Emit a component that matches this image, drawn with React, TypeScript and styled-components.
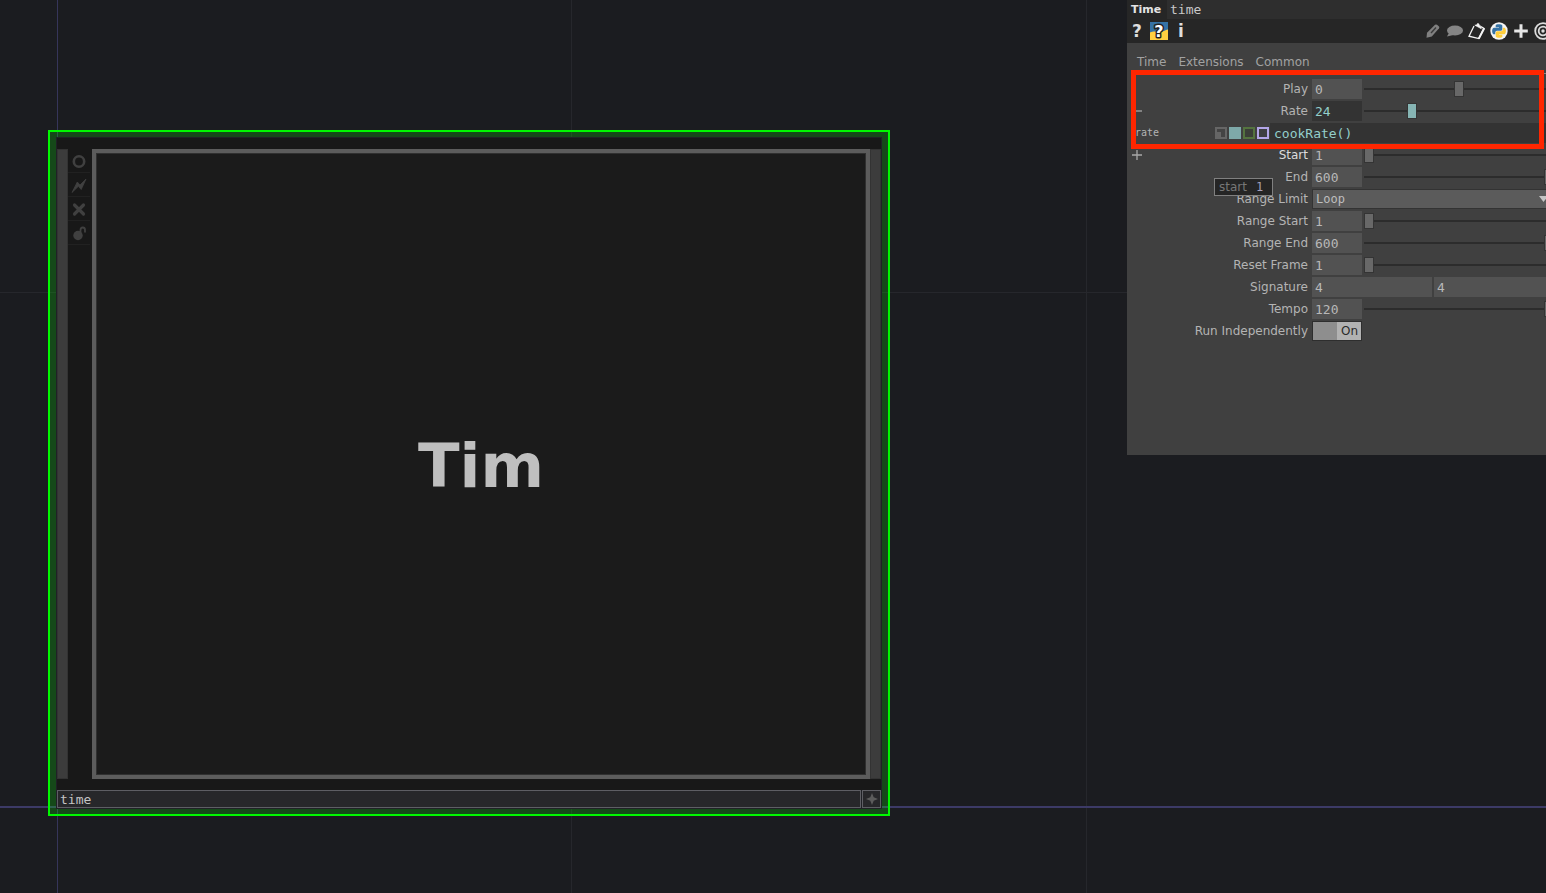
import React from "react";
import styled, { createGlobalStyle } from "styled-components";

const SANS = `"DejaVu Sans", Verdana, sans-serif`;
const MONO = `"DejaVu Sans Mono", monospace`;

const GlobalStyle = createGlobalStyle`
  *, *::before, *::after { box-sizing: border-box; }
  body { margin: 0; background: #1b1c20; }
  button, input, select { margin: 0; padding: 0; border: 0; border-radius: 0; font: inherit; color: inherit; outline: none; }
  svg { display: block; }
`;

/* ---------- network canvas ---------- */

const Workspace = styled.main`
  display: flex;
  align-items: flex-start;
  min-height: 100vh;
  overflow: hidden;
  font-family: ${SANS};
  font-size: 12px;
  color: #b4b4b4;
  background-color: #1b1c20;
  background-image:
    linear-gradient(#3c3a66, #3c3a66),
    linear-gradient(#36355a, #36355a),
    linear-gradient(#26272c, #26272c),
    linear-gradient(#26272c, #26272c),
    linear-gradient(#26272c, #26272c);
  background-repeat: no-repeat;
  background-size: 100% 2px, 1px 100%, 1px 100%, 1px 100%, 100% 1px;
  background-position: 0 806px, 57px 0, 571px 0, 1086px 0, 0 292px;
`;

const NetworkArea = styled.section`
  flex: 1;
  min-width: 0;
  padding: 130px 237px 76px 48px;
`;

const Selection = styled.article`
  border: 2px solid #00f800;
  background: rgba(0, 255, 0, 0.2);
  padding: 5px 6px;
`;

const NodeBody = styled.div`
  background: #202126;
  padding: 1px;
`;

const Strip = styled.div`
  height: 11px;
  background: #181818;
`;

const NodeMiddle = styled.div`
  display: flex;
  height: 630px;
  background: #181818;
`;

const Connector = styled.div`
  width: 11px;
  background: #3c3c3c;
  border: 1px solid #333333;
`;

const FlagColumn = styled.div`
  display: flex;
  flex-direction: column;
  width: 24px;
  padding-right: 2px;
`;

const FlagButton = styled.button`
  display: grid;
  place-items: center;
  height: 24px;
  background: none;
  && { border-bottom: 1px solid #212121; }
  color: #404040;
`;

const Viewer = styled.div`
  flex: 1;
  display: grid;
  place-items: center;
  padding-top: 4px;
  background: #1b1b1b;
  border: 4px solid #5c5c5c;
  outline: 1px solid #303030;
  outline-offset: -5px;
  font-weight: bold;
  font-size: 61px;
  line-height: 70px;
  color: #bfbfbf;
`;

const NameRow = styled.div`
  display: flex;
  gap: 1px;
  height: 18px;
`;

const NameInput = styled.input`
  flex: 1;
  min-width: 0;
  && {
    padding: 0 2px;
    border: 1px solid #5e5e64;
    background: #27272a;
    font-family: ${MONO};
    font-size: 13px;
    color: #c4c4c4;
  }
`;

const ActivateButton = styled.button`
  display: grid;
  place-items: center;
  width: 19px;
  && { border: 1px solid #5e5e64; }
  background: #27272a;
  color: #5c5c5c;
`;

/* ---------- parameter panel ---------- */

const Panel = styled.aside`
  position: relative;
  flex: 0 0 419px;
  height: 455px;
  overflow: hidden;
  background: #404040;
`;

const TitleBar = styled.header`
  display: flex;
  height: 19px;
  line-height: 19px;
  background: #2e2e2e;
`;

const OpType = styled.strong`
  width: 40px;
  padding-left: 4px;
  background: #262626;
  font-size: 11px;
  color: #e4e4e4;
`;

const OpName = styled.span`
  padding-left: 3px;
  font-family: ${MONO};
  font-size: 13px;
  color: #c8c8c8;
`;

const Toolbar = styled.div`
  display: flex;
  justify-content: space-between;
  align-items: center;
  height: 24px;
  margin-right: -6px;
  padding-left: 1px;
  background: #262626;
`;

const ToolGroup = styled.div`
  display: flex;
  gap: 4px;
`;

const ToolButton = styled.button`
  display: grid;
  place-items: center;
  width: 18px;
  height: 18px;
  background: none;
  && {
    font-weight: bold;
    font-size: 17px;
    line-height: 18px;
    color: #dedede;
  }
`;

const Tabs = styled.nav`
  display: flex;
  gap: 12px;
  height: 31px;
  margin-left: 10px;
  padding-top: 11px;
  line-height: 16px;
  border-bottom: 1px solid #8a8a8a;
`;

const Tab = styled.a`
  color: #a2a2a2;
  text-decoration: none;
`;

const Params = styled.form`
  padding-top: 4px;
  margin-right: -8px;
`;

const Row = styled.div`
  display: grid;
  grid-template-columns: 20px 157px minmax(0, 1fr);
  column-gap: 4px;
  align-items: center;
  height: 22px;
`;

const Expander = styled.button`
  display: grid;
  place-items: center;
  width: 10px;
  height: 10px;
  margin-left: 5px;
  background: none;
  && { color: #a8a8a8; }
`;

const Label = styled.label<{ $bright?: boolean }>`
  text-align: right;
  line-height: 20px;
  white-space: nowrap;
  color: ${(p) => (p.$bright ? "#dcdcdc" : "#b4b4b4")};
`;

const Controls = styled.div`
  display: flex;
  gap: 2px;
  height: 20px;
`;

const Field = styled.input<{ $wide?: boolean; $driven?: boolean }>`
  flex: ${(p) => (p.$wide ? "1 1 0" : "0 0 50px")};
  min-width: 0;
  && {
    padding: 0 3px;
    font-family: ${MONO};
    font-size: 13px;
    background: ${(p) => (p.$driven ? "#333333" : "#525252")};
    color: ${(p) => (p.$driven ? "#93cfcc" : "#b8b8b8")};
  }
`;

const Slider = styled.input<{ $driven?: boolean }>`
  flex: 1;
  min-width: 0;
  appearance: none;
  background: linear-gradient(#2c2c2c, #2c2c2c) 0 9px / 100% 2px no-repeat;
  &::-webkit-slider-thumb {
    appearance: none;
    width: 10px;
    height: 16px;
    border: 1px solid #343434;
    background: ${(p) => (p.$driven ? "#86b5b4" : "#686868")};
  }
`;

const MenuWrap = styled.div`
  display: flex;
  flex: 1;
  align-items: center;
  border: 1px solid #333333;
  background: #5b5b5b;
`;

const Menu = styled.select`
  flex: 1;
  height: 18px;
  appearance: none;
  background: none;
  && {
    padding-left: 3px;
    font-family: ${MONO};
    font-size: 12px;
    color: #bebebe;
  }
`;

const MenuArrow = styled.svg`
  margin: 0 5px 0 -14px;
  pointer-events: none;
`;

const ToggleBox = styled.span`
  position: relative;
  display: flex;
  width: 50px;
  border: 1px solid #2e2e2e;
  background: linear-gradient(90deg, #8e8e8e 50%, #b2b2b2 50%);
  color: #2a2a2a;
`;

const ToggleInput = styled.input`
  position: absolute;
  inset: 0;
  appearance: none;
`;

const ToggleText = styled.span`
  flex: 1;
  padding-right: 3px;
  text-align: right;
  line-height: 18px;
`;

const ExpressionRow = styled.div`
  display: flex;
  align-items: center;
  height: 22px;
  padding-left: 8px;
`;

const ParamName = styled.label`
  width: 80px;
  font-family: ${MONO};
  font-size: 10px;
  line-height: 20px;
`;

const Modes = styled.div`
  display: flex;
  gap: 2px;
  margin-right: 1px;
`;

const Mode = styled.button<{ $line: string; $fill: string }>`
  width: 12px;
  height: 12px;
  && { border: 2px solid ${(p) => p.$line}; }
  background: ${(p) => p.$fill};
`;

const Expression = styled.input`
  flex: 1;
  min-width: 0;
  height: 20px;
  && {
    padding: 0 4px;
    background: #333333;
    font-family: ${MONO};
    font-size: 13px;
    color: #93cfcc;
  }
`;

const Highlight = styled.div`
  position: absolute;
  left: 4px;
  right: 2px;
  top: 70px;
  height: 79px;
  border: 5px solid #ff2600;
  pointer-events: none;
`;

const Tooltip = styled.div`
  position: absolute;
  left: 87px;
  top: 178px;
  display: flex;
  gap: 9px;
  height: 18px;
  padding: 0 9px 0 4px;
  border: 1px solid #808080;
  background: #252525;
  line-height: 17px;
  color: #777777;
`;

const TooltipValue = styled.span`
  font-family: ${MONO};
  color: #a39fb8;
`;

/* ---------- icons ---------- */

const PY_BLUE =
  "M14.25.18l.9.2.73.26.59.3.45.32.34.34.25.34.16.33.1.3.04.26.02.2-.01.13V8.5l-.05.63-.13.55-.21.46-.26.38-.3.31-.33.25-.35.19-.35.14-.33.1-.3.07-.26.04-.21.02H8.77l-.69.05-.59.14-.5.22-.41.27-.33.32-.27.35-.2.36-.15.37-.1.35-.07.32-.04.27-.02.21v3.06H3.17l-.21-.03-.28-.07-.32-.12-.35-.18-.36-.26-.36-.36-.35-.46-.32-.59-.28-.73-.21-.88-.14-1.05-.05-1.23.06-1.22.16-1.04.24-.87.32-.71.36-.57.4-.44.42-.33.42-.24.4-.16.36-.1.32-.05.24-.01h.16l.06.01h8.16v-.83H6.18l-.01-2.75-.02-.37.05-.34.11-.31.17-.28.25-.26.31-.23.38-.2.44-.18.51-.15.58-.12.64-.1.71-.06.77-.04.84-.02 1.27.05z";
const PY_YELLOW =
  "M21.1 6.11l.28.06.32.12.35.18.36.27.36.35.35.47.32.59.28.73.21.88.14 1.04.05 1.23-.06 1.23-.16 1.04-.24.86-.32.71-.36.57-.4.45-.42.33-.42.24-.4.16-.36.09-.32.05-.24.02-.16-.01h-8.22v.82h5.84l.01 2.76.02.36-.05.34-.11.31-.17.29-.25.25-.31.24-.38.2-.44.17-.51.15-.58.13-.64.09-.71.07-.77.04-.84.01-1.27-.04-1.07-.14-.9-.2-.73-.25-.59-.3-.45-.33-.34-.34-.25-.34-.16-.33-.1-.3-.04-.25-.02-.2.01-.13v-5.34l.05-.64.13-.54.21-.46.26-.38.3-.32.33-.24.35-.2.35-.14.33-.1.3-.06.26-.04.21-.02.13-.01h5.84l.69-.05.59-.14.5-.21.41-.28.33-.32.27-.35.2-.36.15-.36.1-.35.07-.32.04-.28.02-.21V6.07h2.09l.14.01z";

const PythonHelpIcon = () => (
  <svg width="18" height="18" viewBox="0 0 18 18">
    <rect width="18" height="18" fill="#3572a5" />
    <path d="M0 10.500C3 9 5 9.500 8 9.800C13 10 14 8.500 18 7.500V18H0z" fill="#ffd040" />
    <text x="9" y="15" textAnchor="middle" fontFamily="DejaVu Sans" fontWeight="bold" fontSize="16" fill="#ffffff" stroke="#222222" strokeWidth="3" paintOrder="stroke" strokeLinejoin="round">?</text>
  </svg>
);

const PencilIcon = () => (
  <svg width="18" height="18" viewBox="0 0 18 18" fill="#808080">
    <path d="M2.500 15.800L3 10.800L11 2.800Q12 2 13 2.800L15 4.500Q15.700 5.300 15 6.300L7.800 14.500z" />
    <path d="M7 11L12 5.600" stroke="#3a3a3a" strokeWidth="1.400" />
  </svg>
);

const CommentIcon = () => (
  <svg width="18" height="18" viewBox="0 0 18 18" fill="#858585">
    <ellipse cx="9" cy="8.500" rx="8" ry="5" />
    <path d="M3.500 10L1 14.600L8.500 12.800z" />
  </svg>
);

const ClipboardIcon = () => (
  <svg width="18" height="18" viewBox="0 0 18 18" fill="none" stroke="#f4f4f4">
    <path d="M6 4L1 14.200L10.800 16.600L16 6.400L13 4.600" strokeWidth="1.300" />
    <path d="M10.800 16.600L16.200 6.200" strokeWidth="2" />
    <path d="M6.800 3.200L13.300 6.800L12.500 3.800L11.300 3.200Q11.100 1 9.400 1.600L9 2.800z" fill="#f4f4f4" strokeWidth=".6" />
  </svg>
);

const PythonIcon = () => (
  <svg width="18" height="18" viewBox="0 0 18 18">
    <circle cx="9" cy="9" r="8.700" fill="#f4f4f4" />
    <g transform="translate(2.200 2.200) scale(.567)">
      <path d={PY_BLUE} fill="#3572a5" />
      <path d={PY_YELLOW} fill="#ffce3c" />
    </g>
  </svg>
);

const PlusIcon = () => (
  <svg width="18" height="18" viewBox="0 0 18 18" stroke="#e6e6e6" strokeWidth="3">
    <path d="M9 2.200v13.600M2.200 9h13.600" />
  </svg>
);

const TargetIcon = () => (
  <svg width="18" height="18" viewBox="0 0 18 18" fill="none" stroke="#dcdcdc" strokeWidth="1.800">
    <circle cx="9" cy="9" r="7.800" />
    <circle cx="9" cy="9" r="4.300" />
    <circle cx="9" cy="9" r="1.700" fill="#dcdcdc" stroke="none" />
  </svg>
);

const FlagIcon = ({ children }: { children: React.ReactNode }) => (
  <svg width="16" height="16" viewBox="0 0 16 16" fill="none" stroke="currentColor">
    {children}
  </svg>
);

/* ---------- parameter rows ---------- */

type NumberParamProps = {
  id: string;
  label: string;
  value: string;
  min?: number;
  max: number;
  driven?: boolean;
  bright?: boolean;
  expander?: "plus" | "minus";
};

const NumberParam = ({ id, label, value, min = 0, max, driven, bright, expander }: NumberParamProps) => (
  <Row>
    {expander ? (
      <Expander type="button" aria-label={`Toggle ${label} details`}>
        <svg width="10" height="10" viewBox="0 0 10 10" stroke="currentColor" strokeWidth="1.300">
          <path d={expander === "plus" ? "M0 5h10M5 0v10" : "M0 5h10"} />
        </svg>
      </Expander>
    ) : (
      <span />
    )}
    <Label htmlFor={id} $bright={bright}>{label}</Label>
    <Controls>
      <Field id={id} defaultValue={value} $driven={driven} />
      <Slider type="range" aria-label={`${label} slider`} min={min} max={max} defaultValue={value} $driven={driven} />
    </Controls>
  </Row>
);

export default function App() {
  return (
    <>
      <GlobalStyle />
      <Workspace>
        <NetworkArea>
          <Selection>
            <NodeBody>
              <Strip />
              <NodeMiddle>
                <Connector />
                <FlagColumn>
                  <FlagButton aria-label="Viewer active">
                    <FlagIcon><circle cx="8" cy="8.500" r="5.200" strokeWidth="2.600" /></FlagIcon>
                  </FlagButton>
                  <FlagButton aria-label="Cook">
                    <FlagIcon><path d="M1 15.500L6.300 5L9 8L15 2L10.200 12.500L7.400 9.300z" fill="currentColor" strokeWidth=".8" /></FlagIcon>
                  </FlagButton>
                  <FlagButton aria-label="Bypass">
                    <FlagIcon><path d="M3.500 4l9 9M12.500 4l-9 9" strokeWidth="3.200" strokeLinecap="round" /></FlagIcon>
                  </FlagButton>
                  <FlagButton aria-label="Lock">
                    <FlagIcon>
                      <circle cx="7" cy="10.500" r="4.700" fill="currentColor" stroke="none" />
                      <path d="M9.500 7.500V5Q9.500 2.500 11.800 2.500Q14 2.500 14 5V7.500" strokeWidth="1.800" />
                    </FlagIcon>
                  </FlagButton>
                </FlagColumn>
                <Viewer>Tim</Viewer>
                <Connector />
              </NodeMiddle>
              <Strip />
              <NameRow>
                <NameInput aria-label="Node name" defaultValue="time" />
                <ActivateButton aria-label="Activate viewer">
                  <svg width="12" height="12" viewBox="0 0 12 12" fill="currentColor">
                    <path d="M6 0L7.700 4.300L12 6L7.700 7.700L6 12L4.300 7.700L0 6L4.300 4.300z" />
                  </svg>
                </ActivateButton>
              </NameRow>
            </NodeBody>
          </Selection>
        </NetworkArea>

        <Panel>
          <TitleBar>
            <OpType>Time</OpType>
            <OpName>time</OpName>
          </TitleBar>
          <Toolbar>
            <ToolGroup>
              <ToolButton>?</ToolButton>
              <ToolButton aria-label="Python help"><PythonHelpIcon /></ToolButton>
              <ToolButton>i</ToolButton>
            </ToolGroup>
            <ToolGroup>
              <ToolButton aria-label="Edit"><PencilIcon /></ToolButton>
              <ToolButton aria-label="Comment"><CommentIcon /></ToolButton>
              <ToolButton aria-label="Copy parameters"><ClipboardIcon /></ToolButton>
              <ToolButton aria-label="Python"><PythonIcon /></ToolButton>
              <ToolButton aria-label="Add"><PlusIcon /></ToolButton>
              <ToolButton aria-label="Target"><TargetIcon /></ToolButton>
            </ToolGroup>
          </Toolbar>
          <Tabs>
            <Tab href="#time">Time</Tab>
            <Tab href="#extensions">Extensions</Tab>
            <Tab href="#common">Common</Tab>
          </Tabs>
          <Params>
            <NumberParam id="play" label="Play" value="0" min={-1} max={1} />
            <NumberParam id="rate" label="Rate" value="24" max={100} driven expander="minus" />
            <ExpressionRow>
              <ParamName htmlFor="rate-expression">rate</ParamName>
              <Modes>
                <Mode type="button" aria-label="Constant mode" $line="#666666" $fill="linear-gradient(#666666, #666666) 0 100% / 4px 5px no-repeat #444444" />
                <Mode type="button" aria-label="Expression mode" $line="#7ea9a9" $fill="#7ea9a9" />
                <Mode type="button" aria-label="Export mode" $line="#54733f" $fill="#3b3f38" />
                <Mode type="button" aria-label="Bind mode" $line="#b3a6e8" $fill="#3f3f42" />
              </Modes>
              <Expression id="rate-expression" defaultValue="cookRate()" />
            </ExpressionRow>
            <NumberParam id="start" label="Start" value="1" min={1} max={600} bright expander="plus" />
            <NumberParam id="end" label="End" value="600" max={600} />
            <Row>
              <span />
              <Label htmlFor="limit">Range Limit</Label>
              <Controls>
                <MenuWrap>
                  <Menu id="limit"><option>Loop</option></Menu>
                  <MenuArrow width="9" height="6" viewBox="0 0 9 6"><path d="M0 0h9L4.500 6z" fill="#c4c4c4" /></MenuArrow>
                </MenuWrap>
              </Controls>
            </Row>
            <NumberParam id="range-start" label="Range Start" value="1" min={1} max={600} />
            <NumberParam id="range-end" label="Range End" value="600" max={600} />
            <NumberParam id="reset-frame" label="Reset Frame" value="1" min={1} max={600} />
            <Row>
              <span />
              <Label htmlFor="signature">Signature</Label>
              <Controls>
                <Field id="signature" $wide defaultValue="4" />
                <Field aria-label="Signature denominator" $wide defaultValue="4" />
              </Controls>
            </Row>
            <NumberParam id="tempo" label="Tempo" value="120" max={120} />
            <Row>
              <span />
              <Label htmlFor="independent">Run Independently</Label>
              <Controls>
                <ToggleBox>
                  <ToggleInput id="independent" type="checkbox" defaultChecked />
                  <ToggleText>On</ToggleText>
                </ToggleBox>
              </Controls>
            </Row>
          </Params>
          <Tooltip role="tooltip">
            start <TooltipValue>1</TooltipValue>
          </Tooltip>
          <Highlight />
        </Panel>
      </Workspace>
    </>
  );
}
